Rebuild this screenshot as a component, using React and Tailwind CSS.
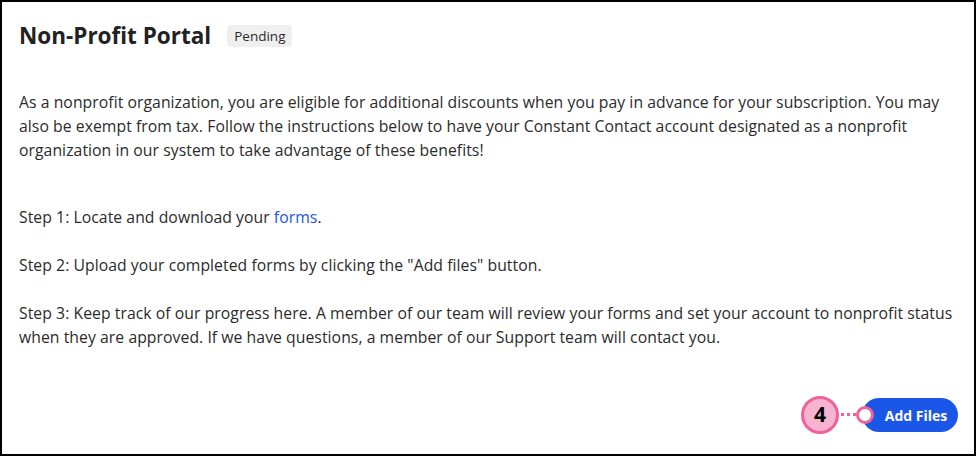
export default function App() {
  return (
    <div className="w-[977px] h-[457px] bg-white">
      <div
        className="relative w-[976px] h-[456px] border-2 border-black flex flex-col text-[#2b2b2b]"
        style={{ fontFamily: "'Open Sans', Lato, sans-serif" }}
      >
        <div className="flex items-center gap-[16px] pl-[17px] pt-[19px]">
          <h1 className="text-[22.5px] font-bold leading-[30px] text-[#222]">Non-Profit Portal</h1>
          <span className="bg-[#efefef] rounded-[4px] px-[7px] h-[22px] flex items-center text-[13.5px] text-[#2b2b2b]">Pending</span>
        </div>
        <div className="pl-[17px] pr-[4px] text-[15.75px] tracking-[0.05px] leading-[24px] mt-[39px]">
          <p className="whitespace-nowrap">
            As a nonprofit organization, you are eligible for additional discounts when you pay in advance for your subscription. You may
            <br />
            also be exempt from tax. Follow the instructions below to have your Constant Contact account designated as a nonprofit
            <br />
            organization in our system to take advantage of these benefits!
          </p>
          <p className="mt-[43px]">
            Step 1: Locate and download your <span className="text-[#1a56e8]">forms</span>.
          </p>
          <p className="mt-[24px]">Step 2: Upload your completed forms by clicking the "Add files" button.</p>
          <p className="mt-[24px] whitespace-nowrap">
            Step 3: Keep track of our progress here. A member of our team will review your forms and set your account to nonprofit status
            <br />
            when they are approved. If we have questions, a member of our Support team will contact you.
          </p>
        </div>
        <div className="flex-1" />
        <div className="flex justify-end pr-[16px] pb-[22px]">
          <div className="relative">
            <button className="h-[34px] w-[96px] rounded-full bg-[#1a56e8] text-white text-[14px] font-bold">
              <span className="pl-[12px]">Add Files</span>
            </button>
            <div className="absolute left-[-61px] top-[-2px] w-[38px] h-[38px] rounded-full bg-[#f7b3cf] border-[3px] border-[#f0629b] flex items-center justify-center text-[21px] font-bold text-black">
              4
            </div>
            <div className="absolute left-[-21px] top-[15px] flex gap-[3px]">
              <span className="w-[3px] h-[3px] bg-[#f0629b]" />
              <span className="w-[3px] h-[3px] bg-[#f0629b]" />
              <span className="w-[3px] h-[3px] bg-[#f0629b]" />
            </div>
            <div className="absolute left-[-6px] top-[8px] w-[18px] h-[18px] rounded-full bg-white border-[3px] border-[#f0629b]" />
          </div>
        </div>
      </div>
    </div>
  );
}
